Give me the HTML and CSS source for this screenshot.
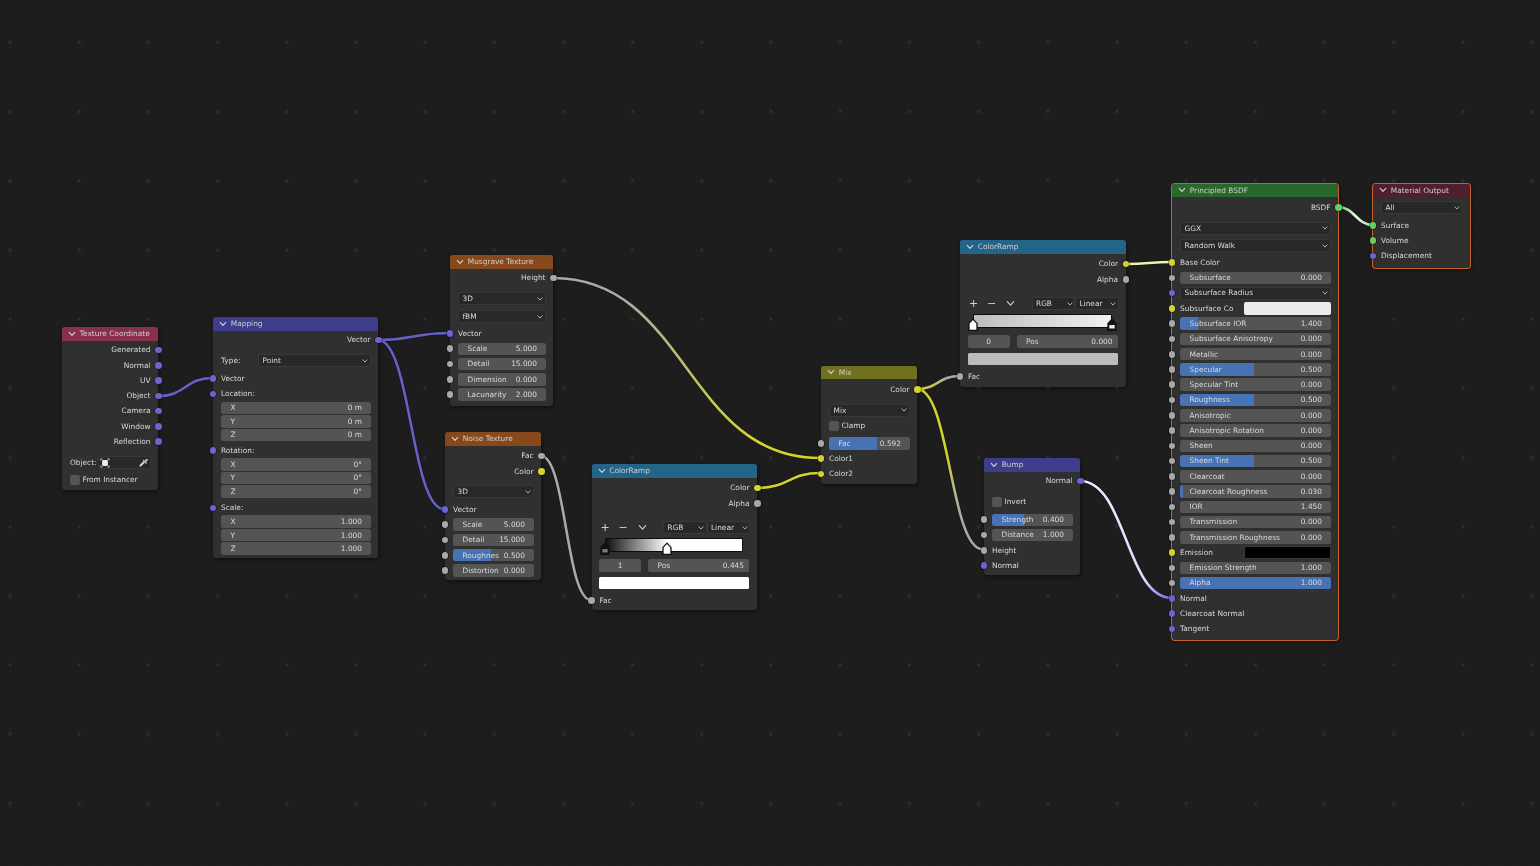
FILE: index.html
```html
<!DOCTYPE html>
<html lang="en">
<head>
<meta charset="utf-8">
<title>Shader Editor</title>
<link rel="stylesheet" href="styles.css">
</head>
<body>
<svg class="defs" width="0" height="0" aria-hidden="true">
  <symbol id="chev" viewBox="0 0 10 10"><path d="M1.500 3 5 6.800 8.500 3" fill="none" stroke="currentColor" stroke-width="1.300" stroke-linecap="round" stroke-linejoin="round"/></symbol>
</svg>
<main class="canvas">
  <svg class="wires" width="1540" height="866" viewBox="0 0 1540 866">
    <defs>
      <linearGradient id="gw4" gradientUnits="userSpaceOnUse" x1="553" y1="278" x2="820" y2="458"><stop offset=".2" stop-color="#a9a9a9"/><stop offset=".8" stop-color="#d2d22c"/></linearGradient>
      <linearGradient id="gw5" gradientUnits="userSpaceOnUse" x1="541" y1="456" x2="591" y2="600"><stop offset="0" stop-color="#a9a9a9"/><stop offset="1" stop-color="#a9a9a9"/></linearGradient>
      <linearGradient id="gw7" gradientUnits="userSpaceOnUse" x1="917" y1="389" x2="960" y2="376"><stop offset=".1" stop-color="#d2d22c"/><stop offset=".8" stop-color="#a9a9a9"/></linearGradient>
      <linearGradient id="gw8" gradientUnits="userSpaceOnUse" x1="917" y1="389" x2="983" y2="549"><stop offset=".4" stop-color="#d2d22c"/><stop offset=".75" stop-color="#a9a9a9"/></linearGradient>
      <linearGradient id="gw10" gradientUnits="userSpaceOnUse" x1="1080" y1="481" x2="1172" y2="598"><stop offset="0" stop-color="#f0eeff"/><stop offset=".8" stop-color="#dcd8ff"/><stop offset="1" stop-color="#6f6fd8"/></linearGradient>
      <linearGradient id="gw11" gradientUnits="userSpaceOnUse" x1="1338" y1="207" x2="1373" y2="225"><stop offset="0" stop-color="#63c763"/><stop offset=".5" stop-color="#ecf8ec"/><stop offset="1" stop-color="#9fdc9f"/></linearGradient>
    </defs>
    <g class="wire-shadow">
      <path d="M159 396C185 396 186 378 212 378"/>
      <path d="M378 340C413 340 414 333 449 333"/>
      <path d="M378 340C411 340 411 509 444 509"/>
      <path d="M553 278C687 278 686 458 820 458"/>
      <path d="M541 456C566 456 566 600 591 600"/>
      <path d="M757 488C789 488 789 473 820 473"/>
      <path d="M917 389C938 389 938 376 960 376"/>
      <path d="M917 389C950 389 950 549.500 983 549.500"/>
      <path d="M1126 264C1149 264 1149 262 1172 262"/>
      <path d="M1080 481C1126 481 1126 598 1172 598"/>
      <path d="M1338 207C1355 207 1356 225 1373 225"/>
    </g>
    <g class="wire">
      <path stroke="#6561c9" d="M159 396C185 396 186 378 212 378"/>
      <path stroke="#6561c9" d="M378 340C413 340 414 333 449 333"/>
      <path stroke="#6561c9" d="M378 340C411 340 411 509 444 509"/>
      <path stroke="url(#gw4)" d="M553 278C687 278 686 458 820 458"/>
      <path stroke="url(#gw5)" d="M541 456C566 456 566 600 591 600"/>
      <path stroke="#d2d22c" d="M757 488C789 488 789 473 820 473"/>
      <path stroke="url(#gw7)" d="M917 389C938 389 938 376 960 376"/>
      <path stroke="url(#gw8)" d="M917 389C950 389 950 549.500 983 549.500"/>
      <path stroke="#f2f0b0" d="M1126 264C1149 264 1149 262 1172 262"/>
      <path stroke="url(#gw10)" d="M1080 481C1126 481 1126 598 1172 598"/>
      <path stroke="url(#gw11)" d="M1338 207C1355 207 1356 225 1373 225"/>
    </g>
  </svg>

  <section class="node n-texcoord">
    <header class="head h-tex"><svg class="chev"><use href="#chev"/></svg>Texture Coordinate</header>
    <div class="body">
      <div class="row out">Generated<i class="sock vec"></i></div>
      <div class="row out">Normal<i class="sock vec"></i></div>
      <div class="row out">UV<i class="sock vec"></i></div>
      <div class="row out">Object<i class="sock vec"></i></div>
      <div class="row out">Camera<i class="sock vec"></i></div>
      <div class="row out">Window<i class="sock vec"></i></div>
      <div class="row out">Reflection<i class="sock vec"></i></div>
      <div class="row gap-l">
        <span class="obj-label">Object:</span>
        <span class="obj-field">
          <svg class="obj-icon" viewBox="0 0 12 12"><path d="M1 3V1h2M9 1h2v2M11 9v2H9M3 11H1V9" fill="none" stroke="#ddd" stroke-width="1"/><rect x="2.500" y="2.500" width="7" height="7" rx="1" fill="#eee"/></svg>
          <svg class="dropper" viewBox="0 0 12 12"><path d="M1.500 10.500 2 8.500 6.500 4 8 5.500 3.500 10Z" fill="#d8d8d8"/><path d="M6 2.800 7.300 4.100 9 2.300a1 1 0 0 1 1.500 1.400L8.700 5.500 10 6.800 9 7.700 5.200 3.800Z" fill="#bdbdbd"/></svg>
        </span>
      </div>
      <div class="row gap-s"><span class="check"></span>From Instancer</div>
    </div>
  </section>

  <section class="node n-mapping">
    <header class="head h-vec"><svg class="chev"><use href="#chev"/></svg>Mapping</header>
    <div class="body">
      <div class="row out">Vector<i class="sock vec"></i></div>
      <div class="row gap-l"><span class="type-label">Type:</span><span class="drop grow"><span>Point</span><svg class="arrow"><use href="#chev"/></svg></span></div>
      <div class="row gap-m"><i class="sock vec"></i>Vector</div>
      <div class="row"><i class="sock vec"></i>Location:</div>
      <div class="triple">
        <div class="row tight"><span class="field"><span>X</span><span>0 m</span></span></div>
        <div class="row tight"><span class="field"><span>Y</span><span>0 m</span></span></div>
        <div class="row tight"><span class="field"><span>Z</span><span>0 m</span></span></div>
      </div>
      <div class="row gap-xs"><i class="sock vec"></i>Rotation:</div>
      <div class="triple">
        <div class="row tight"><span class="field"><span>X</span><span>0°</span></span></div>
        <div class="row tight"><span class="field"><span>Y</span><span>0°</span></span></div>
        <div class="row tight"><span class="field"><span>Z</span><span>0°</span></span></div>
      </div>
      <div class="row gap-s"><i class="sock vec"></i>Scale:</div>
      <div class="triple">
        <div class="row tight"><span class="field"><span>X</span><span>1.000</span></span></div>
        <div class="row tight"><span class="field"><span>Y</span><span>1.000</span></span></div>
        <div class="row tight"><span class="field"><span>Z</span><span>1.000</span></span></div>
      </div>
    </div>
  </section>

  <section class="node n-musgrave">
    <header class="head h-texture"><svg class="chev"><use href="#chev"/></svg>Musgrave Texture</header>
    <div class="body">
      <div class="row out">Height<i class="sock val"></i></div>
      <div class="row gap-l"><span class="drop grow"><span>3D</span><svg class="arrow"><use href="#chev"/></svg></span></div>
      <div class="row gap-m"><span class="drop grow"><span>fBM</span><svg class="arrow"><use href="#chev"/></svg></span></div>
      <div class="row gap-xs"><i class="sock vec"></i>Vector</div>
      <div class="row"><i class="sock val"></i><span class="field"><span>Scale</span><span>5.000</span></span></div>
      <div class="row"><i class="sock val"></i><span class="field"><span>Detail</span><span>15.000</span></span></div>
      <div class="row"><i class="sock val"></i><span class="field"><span>Dimension</span><span>0.000</span></span></div>
      <div class="row"><i class="sock val"></i><span class="field"><span>Lacunarity</span><span>2.000</span></span></div>
    </div>
  </section>

  <section class="node n-noise">
    <header class="head h-texture"><svg class="chev"><use href="#chev"/></svg>Noise Texture</header>
    <div class="body body-3">
      <div class="row out">Fac<i class="sock val"></i></div>
      <div class="row out">Color<i class="sock col"></i></div>
      <div class="row gap-k"><span class="drop grow"><span>3D</span><svg class="arrow"><use href="#chev"/></svg></span></div>
      <div class="row gap-m"><i class="sock vec"></i>Vector</div>
      <div class="row"><i class="sock val"></i><span class="field"><span>Scale</span><span>5.000</span></span></div>
      <div class="row"><i class="sock val"></i><span class="field"><span>Detail</span><span>15.000</span></span></div>
      <div class="row"><i class="sock val"></i><span class="field slider" style="--v:47%"><span>Roughnes</span><span>0.500</span></span></div>
      <div class="row"><i class="sock val"></i><span class="field"><span>Distortion</span><span>0.000</span></span></div>
    </div>
  </section>

  <section class="node n-ramp1">
    <header class="head h-conv"><svg class="chev"><use href="#chev"/></svg>ColorRamp</header>
    <div class="body body-3">
      <div class="row out">Color<i class="sock col"></i></div>
      <div class="row out">Alpha<i class="sock val"></i></div>
      <div class="row gap-xl tools">
        <span class="tool">+</span><span class="tool">−</span><svg class="tool-chev"><use href="#chev"/></svg>
        <span class="drop mini"><span>RGB</span><svg class="arrow"><use href="#chev"/></svg></span>
        <span class="drop mini"><span>Linear</span><svg class="arrow"><use href="#chev"/></svg></span>
      </div>
      <div class="ramp-wrap">
        <div class="ramp ramp-a">
          <svg class="stop stop-a0" viewBox="0 0 9 12"><path d="M.8 11.400V5L4.500 1 8.200 5v6.400Z" fill="#111" stroke="#111" stroke-width="1.200"/><rect x="2" y="6.500" width="5" height="3.200" fill="#777"/></svg>
          <svg class="stop stop-a1" viewBox="0 0 9 12"><path d="M.8 11.400V5L4.500 1 8.200 5v6.400Z" fill="#fff" stroke="#111" stroke-width="1.200"/></svg>
        </div>
      </div>
      <div class="ramp-fields">
        <span class="field index"><span>1</span></span>
        <span class="field pos"><span>Pos</span><span>0.445</span></span>
      </div>
      <div class="swatch sw-white"></div>
      <div class="row gap-r"><i class="sock val"></i>Fac</div>
    </div>
  </section>

  <section class="node n-mix">
    <header class="head h-mix"><svg class="chev"><use href="#chev"/></svg>Mix</header>
    <div class="body body-3">
      <div class="row out">Color<i class="sock col"></i></div>
      <div class="row gap-l"><span class="drop grow"><span>Mix</span><svg class="arrow"><use href="#chev"/></svg></span></div>
      <div class="row"><span class="check"></span>Clamp</div>
      <div class="row gap-m"><i class="sock val"></i><span class="field slider" style="--v:59.200%"><span>Fac</span><span>0.592</span></span></div>
      <div class="row"><i class="sock col"></i>Color1</div>
      <div class="row"><i class="sock col"></i>Color2</div>
    </div>
  </section>

  <section class="node n-ramp2">
    <header class="head h-conv"><svg class="chev"><use href="#chev"/></svg>ColorRamp</header>
    <div class="body body-3">
      <div class="row out">Color<i class="sock col"></i></div>
      <div class="row out">Alpha<i class="sock val"></i></div>
      <div class="row gap-xl tools">
        <span class="tool">+</span><span class="tool">−</span><svg class="tool-chev"><use href="#chev"/></svg>
        <span class="drop mini"><span>RGB</span><svg class="arrow"><use href="#chev"/></svg></span>
        <span class="drop mini"><span>Linear</span><svg class="arrow"><use href="#chev"/></svg></span>
      </div>
      <div class="ramp-wrap">
        <div class="ramp ramp-b">
          <svg class="stop stop-b0" viewBox="0 0 9 12"><path d="M.8 11.400V5L4.500 1 8.200 5v6.400Z" fill="#fff" stroke="#111" stroke-width="1.200"/></svg>
          <svg class="stop stop-b1" viewBox="0 0 9 12"><path d="M.8 11.400V5L4.500 1 8.200 5v6.400Z" fill="#111" stroke="#111" stroke-width="1.200"/><rect x="2" y="6.500" width="5" height="3.200" fill="#eee"/></svg>
        </div>
      </div>
      <div class="ramp-fields">
        <span class="field index"><span>0</span></span>
        <span class="field pos"><span>Pos</span><span>0.000</span></span>
      </div>
      <div class="swatch sw-grey"></div>
      <div class="row gap-r"><i class="sock val"></i>Fac</div>
    </div>
  </section>

  <section class="node n-bump">
    <header class="head h-vec"><svg class="chev"><use href="#chev"/></svg>Bump</header>
    <div class="body">
      <div class="row out">Normal<i class="sock vec"></i></div>
      <div class="row gap-l"><span class="check"></span>Invert</div>
      <div class="row gap-m"><i class="sock val"></i><span class="field slider" style="--v:40%"><span>Strength</span><span>0.400</span></span></div>
      <div class="row"><i class="sock val"></i><span class="field"><span>Distance</span><span>1.000</span></span></div>
      <div class="row"><i class="sock val"></i>Height</div>
      <div class="row"><i class="sock vec"></i>Normal</div>
    </div>
  </section>

  <section class="node n-bsdf sel">
    <header class="head h-shader"><svg class="chev"><use href="#chev"/></svg>Principled BSDF</header>
    <div class="body body-3">
      <div class="row out">BSDF<i class="sock sh"></i></div>
      <div class="row gap-l"><span class="drop grow"><span>GGX</span><svg class="arrow"><use href="#chev"/></svg></span></div>
      <div class="row gap-s"><span class="drop grow"><span>Random Walk</span><svg class="arrow"><use href="#chev"/></svg></span></div>
      <div class="row gap-s"><i class="sock col"></i>Base Color</div>
      <div class="row"><i class="sock val"></i><span class="field"><span>Subsurface</span><span>0.000</span></span></div>
      <div class="row"><i class="sock vec"></i><span class="drop grow"><span>Subsurface Radius</span><svg class="arrow"><use href="#chev"/></svg></span></div>
      <div class="row"><i class="sock col"></i><span class="swatch-label">Subsurface Co</span><span class="col-field cf-white"></span></div>
      <div class="row"><i class="sock val"></i><span class="field slider" style="--v:12%"><span>Subsurface IOR</span><span>1.400</span></span></div>
      <div class="row"><i class="sock val"></i><span class="field"><span>Subsurface Anisotropy</span><span>0.000</span></span></div>
      <div class="row"><i class="sock val"></i><span class="field"><span>Metallic</span><span>0.000</span></span></div>
      <div class="row"><i class="sock val"></i><span class="field slider" style="--v:49%"><span>Specular</span><span>0.500</span></span></div>
      <div class="row"><i class="sock val"></i><span class="field"><span>Specular Tint</span><span>0.000</span></span></div>
      <div class="row"><i class="sock val"></i><span class="field slider" style="--v:49%"><span>Roughness</span><span>0.500</span></span></div>
      <div class="row"><i class="sock val"></i><span class="field"><span>Anisotropic</span><span>0.000</span></span></div>
      <div class="row"><i class="sock val"></i><span class="field"><span>Anisotropic Rotation</span><span>0.000</span></span></div>
      <div class="row"><i class="sock val"></i><span class="field"><span>Sheen</span><span>0.000</span></span></div>
      <div class="row"><i class="sock val"></i><span class="field slider" style="--v:49%"><span>Sheen Tint</span><span>0.500</span></span></div>
      <div class="row"><i class="sock val"></i><span class="field"><span>Clearcoat</span><span>0.000</span></span></div>
      <div class="row"><i class="sock val"></i><span class="field slider" style="--v:2%"><span>Clearcoat Roughness</span><span>0.030</span></span></div>
      <div class="row"><i class="sock val"></i><span class="field"><span>IOR</span><span>1.450</span></span></div>
      <div class="row"><i class="sock val"></i><span class="field"><span>Transmission</span><span>0.000</span></span></div>
      <div class="row"><i class="sock val"></i><span class="field"><span>Transmission Roughness</span><span>0.000</span></span></div>
      <div class="row"><i class="sock col"></i><span class="swatch-label">Emission</span><span class="col-field cf-black"></span></div>
      <div class="row"><i class="sock val"></i><span class="field"><span>Emission Strength</span><span>1.000</span></span></div>
      <div class="row"><i class="sock val"></i><span class="field slider" style="--v:100%"><span>Alpha</span><span>1.000</span></span></div>
      <div class="row"><i class="sock vec"></i>Normal</div>
      <div class="row"><i class="sock vec"></i>Clearcoat Normal</div>
      <div class="row"><i class="sock vec"></i>Tangent</div>
    </div>
  </section>

  <section class="node n-output sel">
    <header class="head h-output"><svg class="chev"><use href="#chev"/></svg>Material Output</header>
    <div class="body body-3">
      <div class="row"><span class="drop grow"><span>All</span><svg class="arrow"><use href="#chev"/></svg></span></div>
      <div class="row gap-m"><i class="sock sh"></i>Surface</div>
      <div class="row"><i class="sock sh"></i>Volume</div>
      <div class="row"><i class="sock vec"></i>Displacement</div>
    </div>
  </section>
</main>
</body>
</html>
```

FILE: styles.css
```css
* { box-sizing: border-box; }
html, body { margin: 0; height: 100%; }
body { background: #1d1d1d; overflow: hidden; }
.defs { display: block; height: 0; }

.canvas {
  position: relative;
  width: 1540px;
  height: 866px;
  overflow: hidden;
  font: 7.4px/1 "DejaVu Sans", sans-serif;
  text-rendering: geometricPrecision;
  color: #dadada;
  background-color: #1d1d1d;
  background-image:
    radial-gradient(circle, #343434 0, #2d2d2d 1px, transparent 2.4px),
    radial-gradient(circle, #232323 0, transparent 1px);
  background-size: 69.2px 69.2px, 13.84px 13.84px;
  background-position: -24.6px 7.8px, 3.1px 1.3px;
  filter: blur(.35px);
}

.wires { position: absolute; left: 0; top: 0; }
.wires path { fill: none; stroke-linecap: round; }
.wire-shadow path { stroke: #111; stroke-width: 3.8; opacity: .55; }
.wire path { stroke-width: 2.600; }

.node {
  position: absolute;
  background: #303030;
  border-radius: 3px;
  box-shadow: 1px 2px 4px rgba(0, 0, 0, .45);
}
.node.sel { box-shadow: 0 0 0 1px #c4622a, 1px 2px 4px rgba(0, 0, 0, .45); }

.n-texcoord { left: 62px; top: 327px; width: 96px; height: 163px; }
.n-mapping { left: 213px; top: 317px; width: 165px; height: 241px; }
.n-musgrave { left: 450px; top: 255px; width: 103px; height: 151px; }
.n-noise { left: 445px; top: 432px; width: 96px; height: 148px; }
.n-ramp1 { left: 591.500px; top: 464px; width: 165.500px; height: 146px; }
.n-mix { left: 821px; top: 365.500px; width: 96px; height: 118.500px; }
.n-ramp2 { left: 960px; top: 240px; width: 165.500px; height: 147px; }
.n-bump { left: 984px; top: 458px; width: 96px; height: 117px; }
.n-bsdf { left: 1172px; top: 183.500px; width: 166px; height: 456.500px; }
.n-output { left: 1373px; top: 183.500px; width: 96.500px; height: 84px; }

.head {
  display: flex;
  align-items: center;
  height: 13.500px;
  padding-left: 6px;
  border-radius: 3px 3px 0 0;
  color: #cfcfcf;
}
.h-tex { background: #8a2f4e; }
.h-vec { background: #3d3d8c; }
.h-texture { background: #87491c; }
.h-conv { background: #246488; }
.h-mix { background: #70701e; }
.h-shader { background: #28682c; }
.h-output { background: #4f1f2c; }

.chev { width: 8px; height: 8px; margin-right: 3.800px; flex: none; color: #d6d6d6; }

.body { padding-top: 2px; }
.body-3 { padding-top: 3px; }

.row {
  position: relative;
  display: flex;
  align-items: center;
  height: 15.270px;
  padding: 0 7.500px 0 8px;
  white-space: nowrap;
}
.row.out { justify-content: flex-end; }
.row.tight { height: 13.500px; }
.triple { margin-top: -.5px; }

.gap-xs { margin-top: 1.500px; }
.gap-s { margin-top: 1.800px; }
.gap-m { margin-top: 2.500px; }
.gap-k { margin-top: 5px; }
.gap-l { margin-top: 5.600px; }
.gap-r { margin-top: 3.400px; }
.gap-xl { margin-top: 9px; }

.sock {
  position: absolute;
  left: -3.500px;
  top: calc(50% - 3.300px);
  width: 6.600px;
  height: 6.600px;
  border-radius: 50%;
  box-shadow: 0 0 0 .6px rgba(0, 0, 0, .55);
}
.out .sock { left: auto; right: -3.800px; }
.vec { background: #6a66d0; }
.val { background: #a8a8a8; }
.col { background: #d4d42c; }
.sh { background: #63cf63; }

.field, .drop {
  display: flex;
  align-items: center;
  justify-content: space-between;
  height: 12.500px;
  flex: 1 1 auto;
  min-width: 0;
  border-radius: 2.500px;
  overflow: hidden;
}
.field {
  padding: 0 8.500px 0 9.500px;
  background: #545454;
}
.slider {
  background: linear-gradient(to right, #4772b3 var(--v), #545454 var(--v));
}
.drop {
  padding: 0 1.500px 0 3.500px;
  background: #282828;
  border: 1px solid #383838;
  height: 13px;
}
.arrow { width: 6px; height: 6px; flex: none; color: #d6d6d6; }

.type-label { width: 37px; flex: none; }

.check {
  width: 10px;
  height: 10px;
  margin: 0 3px 0 -.5px;
  flex: none;
  background: #545454;
  border-radius: 2px;
}

.obj-label { margin-right: 1.500px; }
.obj-field {
  display: flex;
  align-items: center;
  justify-content: space-between;
  flex: 1 1 auto;
  height: 12.500px;
  padding: 0 1px 0 1px;
  background: #282828;
  border: 1px solid #383838;
  border-radius: 2.500px;
}
.obj-icon { width: 10px; height: 10px; }
.dropper { width: 11px; height: 11px; }

.swatch-label { width: 63.500px; flex: none; }
.col-field { flex: 1 1 auto; height: 12.500px; border-radius: 2px; }
.cf-white { background: #ececec; }
.cf-black { background: #000; border: 1px solid #3a3a3a; }

.tools { padding-right: 7px; }
.tool {
  width: 18px;
  margin-left: -3.500px;
  margin-right: 3.500px;
  font-size: 11px;
  text-align: center;
  color: #d0d0d0;
}
.tool-chev { width: 9px; height: 9px; margin-left: 2px; flex: none; color: #cfcfcf; }
.drop.mini { flex: 0 0 43.500px; }
.drop.mini:nth-of-type(3) { margin-left: auto; }

.ramp-wrap { padding: 3.200px 14px 0 13px; }
.ramp {
  position: relative;
  height: 14px;
  border: 1.500px solid #0c0c0c;
}
.ramp-a { background: linear-gradient(to right, #111 0, #fff 45%, #fff 100%); }
.ramp-b { background: linear-gradient(to right, #bdbdbd 0, #f0f0f0 100%); }
.stop { position: absolute; top: 3px; width: 10px; height: 13px; }
.stop-a0 { left: -6px; }
.stop-a1 { left: 56.500px; }
.stop-b0 { left: -6px; }
.stop-b1 { right: -6px; }

.ramp-fields {
  display: flex;
  gap: 7px;
  margin-top: 6.700px;
  padding: 0 8px 0 7.500px;
}
.ramp-fields .field { flex: 1 1 auto; }
.ramp-fields .index { flex: 0 0 42px; justify-content: center; padding: 0; }
.ramp-fields .pos { padding: 0 5px 0 9.500px; }

.swatch {
  height: 12px;
  margin: 5.700px 8px 0 7.500px;
  border-radius: 1.500px;
}
.sw-white { background: #fff; }
.sw-grey { background: #bcbcbc; }
```
